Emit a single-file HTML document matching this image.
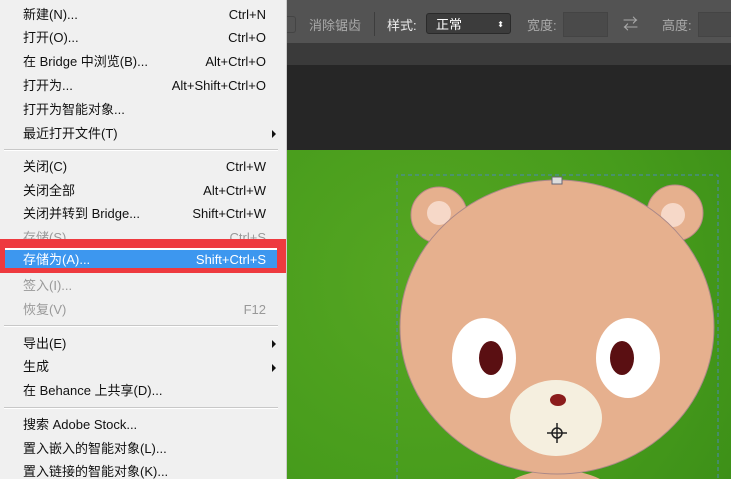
<!DOCTYPE html><html><head><meta charset="utf-8"><style>
html,body{margin:0;width:731px;height:479px;overflow:hidden}
body{position:relative;background:#262626;font-family:"Liberation Sans","Noto Sans CJK SC",sans-serif;}
.tb{position:absolute;left:287px;top:0;width:444px;height:43px;background:#535353;border-bottom:1px solid #3a3a3a}
.tab{position:absolute;left:287px;top:44px;width:444px;height:21px;background:#3a3a3a}
.grass{position:absolute;left:287px;top:150px;width:444px;height:329px;background:radial-gradient(circle at 30% 40%,#56a622,#479c1c 60%,#3d9018)}
.menu{position:absolute;left:0;top:0;width:286px;height:479px;overflow:hidden;background:#f0f0f0;border-right:1px solid #ccc;font-size:13px;color:#111}
.it{position:absolute;left:23px;right:20px;height:20px;line-height:20px}
.it span{position:absolute;right:0;top:0}
.dis{color:#999}
.sep{position:absolute;left:4px;right:8px;height:0;border-top:1px solid #c8c8c8;border-bottom:1px solid #fff}
.arr{position:absolute;right:10px;width:0;height:0;border-left:4px solid #111;border-top:4px solid transparent;border-bottom:4px solid transparent}
.t{position:absolute;color:#aaa;font-size:13px;top:15px}
</style></head><body>
<div class="tb">
<div style="position:absolute;left:0;top:16px;width:8px;height:15px;border:1px solid #444;border-left:none;border-radius:0 3px 3px 0"></div>
<div class="t" style="left:22px">消除锯齿</div>
<div style="position:absolute;left:87px;top:12px;width:1px;height:24px;background:#3d3d3d"></div>
<div class="t" style="left:100px;color:#eee">样式:</div>
<div style="position:absolute;left:139px;top:13px;width:85px;height:21px;background:#3c3c3c;border:1px solid #2a2a2a;border-radius:3px;color:#fff;font-size:13px;line-height:21px;padding-left:9px;box-sizing:border-box">正常<span style="position:absolute;right:6px;font-size:8px">⬍</span></div>
<div class="t" style="left:240px">宽度:</div>
<div style="position:absolute;left:276px;top:12px;width:43px;height:23px;background:#4a4a4a;border:1px solid #444"></div>
<div class="t" style="left:336px;font-size:15px;top:13px">⇄</div>
<div class="t" style="left:375px">高度:</div>
<div style="position:absolute;left:411px;top:12px;width:33px;height:23px;background:#4a4a4a;border:1px solid #444;border-right:none"></div>
</div>
<div class="tab"></div>
<div class="grass"></div>
<svg style="position:absolute;left:0;top:0;display:block" width="731" height="479">
<ellipse cx="557" cy="500" rx="60" ry="30" fill="#e6b08e"/>
<circle cx="439" cy="215" r="28" fill="#e6b08e" stroke="#b88" stroke-width="1"/><circle cx="439" cy="213" r="12" fill="#f6d8c8"/>
<circle cx="675" cy="213" r="28" fill="#e6b08e" stroke="#b88" stroke-width="1"/><circle cx="673" cy="215" r="12" fill="#f6d8c8"/>
<ellipse cx="557" cy="327" rx="157" ry="147" fill="#e6b08e" stroke="#a88" stroke-width="1"/>
<ellipse cx="484" cy="358" rx="32" ry="40" fill="#fff"/><ellipse cx="491" cy="358" rx="12" ry="17" fill="#5a0f12"/>
<ellipse cx="628" cy="358" rx="32" ry="40" fill="#fff"/><ellipse cx="622" cy="358" rx="12" ry="17" fill="#5a0f12"/>
<ellipse cx="556" cy="418" rx="46" ry="38" fill="#f5efdf"/>
<ellipse cx="558" cy="400" rx="8" ry="6" fill="#8b1c1c"/>
<path d="M397 479V175H718V479" fill="none" stroke="#4a88b8" stroke-dasharray="4 3"/>
<rect x="552" y="177" width="10" height="7" fill="#ddd" stroke="#667"/>
<g stroke="#222" fill="none" stroke-width="1.5"><circle cx="557" cy="433" r="5"/><path d="M557 423v20M547 433h20"/></g>
</svg>
<div class="menu">
<div class="it" style="top:5px">新建(N)...<span>Ctrl+N</span></div>
<div class="it" style="top:28px">打开(O)...<span>Ctrl+O</span></div>
<div class="it" style="top:52px">在 Bridge 中浏览(B)...<span>Alt+Ctrl+O</span></div>
<div class="it" style="top:76px">打开为...<span>Alt+Shift+Ctrl+O</span></div>
<div class="it" style="top:100px">打开为智能对象...</div>
<div class="it" style="top:124px">最近打开文件(T)</div><div class="arr" style="top:130px"></div>
<div class="sep" style="top:149px"></div>
<div class="it" style="top:157px">关闭(C)<span>Ctrl+W</span></div>
<div class="it" style="top:181px">关闭全部<span>Alt+Ctrl+W</span></div>
<div class="it" style="top:204px">关闭并转到 Bridge...<span>Shift+Ctrl+W</span></div>
<div class="it dis" style="top:228px">存储(S)<span>Ctrl+S</span></div>
<div style="position:absolute;left:0;top:239px;width:287px;height:34px;background:#ee3a3f"></div>
<div style="position:absolute;left:5px;top:248px;width:272px;height:20px;background:#3d97ef;border-top:2px solid #fff;box-sizing:border-box"></div>
<div class="it" style="top:252px;color:#fff;height:16px;line-height:16px;overflow:hidden">存储为(A)...<span>Shift+Ctrl+S</span></div>
<div class="it dis" style="top:276px">签入(I)...</div>
<div class="it dis" style="top:300px">恢复(V)<span>F12</span></div>
<div class="sep" style="top:325px"></div>
<div class="it" style="top:334px">导出(E)</div><div class="arr" style="top:340px"></div>
<div class="it" style="top:357px">生成</div><div class="arr" style="top:364px"></div>
<div class="it" style="top:381px">在 Behance 上共享(D)...</div>
<div class="sep" style="top:407px"></div>
<div class="it" style="top:415px">搜索 Adobe Stock...</div>
<div class="it" style="top:439px">置入嵌入的智能对象(L)...</div>
<div class="it" style="top:462px;height:17px;overflow:hidden">置入链接的智能对象(K)...</div>
</div>
</body></html>
